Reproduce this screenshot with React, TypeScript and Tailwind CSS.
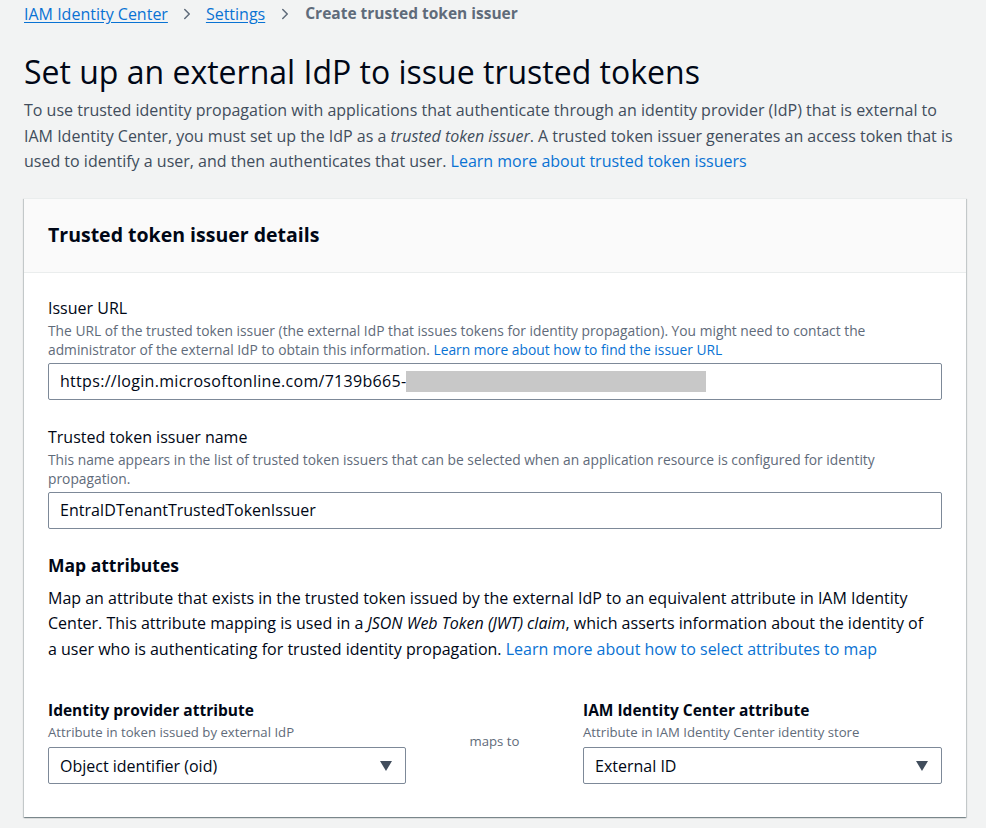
import { ChevronRight } from "lucide-react";

const FONT = { fontFamily: '"Open Sans", "Noto Sans", Arial, sans-serif' };

function Caret() {
  return (
    <svg width="12" height="10" viewBox="0 0 12 10" className="shrink-0">
      <polygon points="0,0 12,0 6,10" fill="#414d5c" />
    </svg>
  );
}

function FieldLabel({ title, desc }: { title: string; desc: React.ReactNode }) {
  return (
    <div>
      <p className="text-[16px] leading-[22px] text-[#000716]">{title}</p>
      <p className="text-[13.8px] leading-[19px] text-[#5f6b7a] mt-[2px]">{desc}</p>
    </div>
  );
}

function Select({ value }: { value: string }) {
  return (
    <div className="mt-[5px] h-[37px] flex items-center justify-between pl-[11px] pr-[13px] border border-[#7d8998] rounded-[2px] bg-white">
      <span className="text-[16px] text-[#000716]">{value}</span>
      <Caret />
    </div>
  );
}

export default function App() {
  return (
    <div className="min-h-screen bg-[#f2f3f3] pl-[24px] pr-[20px]" style={FONT}>
      {/* breadcrumbs */}
      <nav className="flex items-center h-[28px] text-[16px]">
        <a className="text-[#0972d3] underline underline-offset-2">IAM Identity Center</a>
        <ChevronRight size={18} strokeWidth={2} className="mx-[10px] text-[#5f6b7a]" />
        <a className="text-[#0972d3] underline underline-offset-2">Settings</a>
        <ChevronRight size={18} strokeWidth={2} className="mx-[11px] text-[#5f6b7a]" />
        <span className="font-bold text-[#5f6b7a] text-[15.5px]">Create trusted token issuer</span>
      </nav>

      <h1 className="mt-[24px] text-[32px] leading-[40px] text-[#000716]">
        Set up an external IdP to issue trusted tokens
      </h1>
      <p className="mt-[6px] text-[16px] leading-[25.5px] text-[#414d5c]">
        To use trusted identity propagation with applications that authenticate through an identity provider (IdP) that
        is external to
        <br />
        IAM Identity Center, you must set up the IdP as a <i>trusted token issuer</i>. A trusted token issuer generates
        an access token that is
        <br />
        used to identify a user, and then authenticates that user.{" "}
        <a className="text-[#0972d3]">Learn more about trusted token issuers</a>
      </p>

      <section className="mt-[23px] bg-white border-t border-[#eaeded] shadow-[0_1px_1px_0_rgba(0,28,36,0.3),1px_1px_1px_0_rgba(0,28,36,0.15),-1px_1px_1px_0_rgba(0,28,36,0.15)]">
        <header className="h-[74px] flex items-center px-[24px] bg-[#fafafa] border-b border-[#eaeded]">
          <h2 className="text-[19.5px] font-bold text-[#000716]">Trusted token issuer details</h2>
        </header>

        <div className="px-[24px] pt-[24px] pb-[33px]">
          <FieldLabel
            title="Issuer URL"
            desc={
              <>
                The URL of the trusted token issuer (the external IdP that issues tokens for identity propagation). You
                might need to contact the
                <br />
                administrator of the external IdP to obtain this information.{" "}
                <a className="text-[#0972d3]">Learn more about how to find the issuer URL</a>
              </>
            }
          />
          <div className="mt-[4px] h-[37px] flex items-center pl-[11px] border border-[#7d8998] rounded-[2px] bg-white">
            <span className="text-[16px] tracking-[0.3px] text-[#000716]">https://login.microsoftonline.com/7139b665-</span>
            <span className="w-[300px] h-[21px] bg-[#c8c8c8]" />
          </div>

          <div className="mt-[26px]">
            <FieldLabel
              title="Trusted token issuer name"
              desc={
                <>
                  This name appears in the list of trusted token issuers that can be selected when an application
                  resource is configured for identity
                  <br />
                  propagation.
                </>
              }
            />
          </div>
          <div className="mt-[4px] h-[37px] flex items-center pl-[11px] border border-[#7d8998] rounded-[2px] bg-white">
            <span className="text-[16px] text-[#000716]">EntraIDTenantTrustedTokenIssuer</span>
          </div>

          <h3 className="mt-[24px] text-[17.5px] leading-[24px] font-bold text-[#000716]">Map attributes</h3>
          <p className="mt-[9px] text-[16px] leading-[25.5px] text-[#000716]">
            Map an attribute that exists in the trusted token issued by the external IdP to an equivalent attribute in
            IAM Identity
            <br />
            Center. This attribute mapping is used in a <i>JSON Web Token (JWT) claim</i>, which asserts information
            about the identity of
            <br />
            a user who is authenticating for trusted identity propagation.{" "}
            <a className="text-[#0972d3]">Learn more about how to select attributes to map</a>
          </p>

          <div className="mt-[37px] grid grid-cols-[358px_1fr_359px]">
            <div>
              <p className="text-[15.5px] leading-[22px] font-bold text-[#000716]">Identity provider attribute</p>
              <p className="text-[13.2px] leading-[19px] text-[#5f6b7a] mt-[2px]">Attribute in token issued by external IdP</p>
              <Select value="Object identifier (oid)" />
            </div>
            <div className="flex justify-center pt-[33px]">
              <span className="text-[13.2px] leading-[19px] text-[#5f6b7a]">maps to</span>
            </div>
            <div>
              <p className="text-[15.5px] leading-[22px] font-bold text-[#000716]">IAM Identity Center attribute</p>
              <p className="text-[13.2px] leading-[19px] text-[#5f6b7a] mt-[2px]">Attribute in IAM Identity Center identity store</p>
              <Select value="External ID" />
            </div>
          </div>
        </div>
      </section>
    </div>
  );
}
